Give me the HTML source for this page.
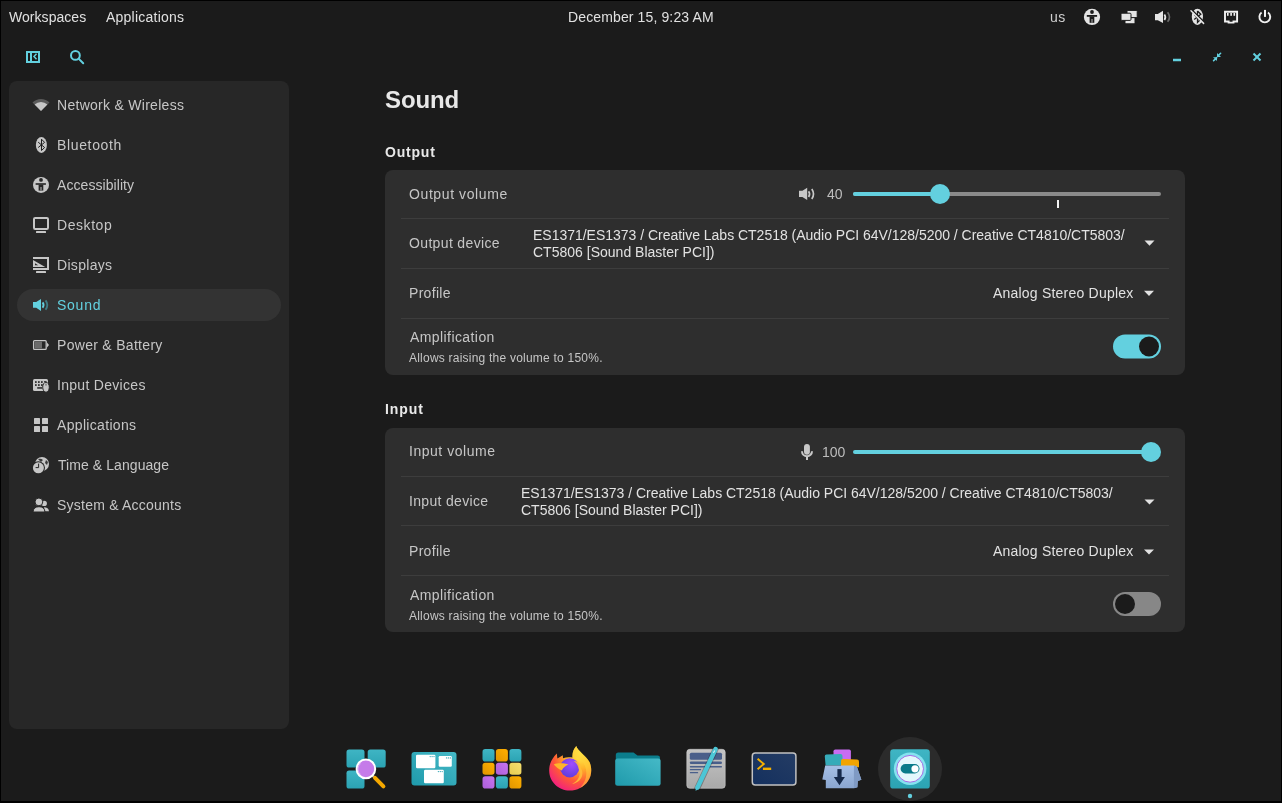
<!DOCTYPE html>
<html><head><meta charset="utf-8">
<style>
*{margin:0;padding:0;box-sizing:border-box}
html,body{width:1282px;height:803px;overflow:hidden;background:#000}
body{font-family:"Liberation Sans",sans-serif;position:relative}
#scr{position:absolute;left:1px;top:1px;width:1280px;height:800px;background:#1b1b1b}
.a{position:absolute;white-space:nowrap;will-change:transform}
svg{position:absolute;overflow:visible}
.b{position:absolute}
</style></head><body>
<div id="scr"></div>
<!-- sidebar -->
<div class="b" style="left:9px;top:81px;width:280px;height:648px;background:#272727;border-radius:8px"></div>
<div class="b" style="left:17px;top:289px;width:264px;height:32px;background:#333333;border-radius:16px"></div>
<!-- cards -->
<div class="b" style="left:385px;top:170px;width:800px;height:205px;background:#2e2e2e;border-radius:8px"></div>
<div class="b" style="left:401px;top:218px;width:768px;height:1px;background:#3d3d3d"></div>
<div class="b" style="left:401px;top:268px;width:768px;height:1px;background:#3d3d3d"></div>
<div class="b" style="left:401px;top:318px;width:768px;height:1px;background:#3d3d3d"></div>
<div class="b" style="left:385px;top:428px;width:800px;height:204px;background:#2e2e2e;border-radius:8px"></div>
<div class="b" style="left:401px;top:476px;width:768px;height:1px;background:#3d3d3d"></div>
<div class="b" style="left:401px;top:525px;width:768px;height:1px;background:#3d3d3d"></div>
<div class="b" style="left:401px;top:575px;width:768px;height:1px;background:#3d3d3d"></div>
<div id="t_ws" class="a" style="left:9.20px;top:9px;font-size:14px;line-height:16px;color:#e0e0e0;letter-spacing:0.044px;">Workspaces</div>
<div id="t_apps" class="a" style="left:105.90px;top:9px;font-size:14px;line-height:16px;color:#e0e0e0;letter-spacing:0.236px;">Applications</div>
<div id="t_date" class="a" style="left:568.10px;top:9px;font-size:14px;line-height:16px;color:#e0e0e0;letter-spacing:0.126px;">December 15, 9:23 AM</div>
<div id="t_us" class="a" style="left:1050.20px;top:9px;font-size:14px;line-height:16px;color:#cfcfcf;letter-spacing:0.400px;">us</div>
<div id="n0" class="a" style="left:57.40px;top:97px;font-size:14px;line-height:16px;color:#c6c6c6;letter-spacing:0.282px;">Network &amp; Wireless</div>
<div id="n1" class="a" style="left:56.50px;top:137px;font-size:14px;line-height:16px;color:#c6c6c6;letter-spacing:0.650px;">Bluetooth</div>
<div id="n2" class="a" style="left:57.30px;top:177px;font-size:14px;line-height:16px;color:#c6c6c6;letter-spacing:0.067px;">Accessibility</div>
<div id="n3" class="a" style="left:56.50px;top:217px;font-size:14px;line-height:16px;color:#c6c6c6;letter-spacing:0.567px;">Desktop</div>
<div id="n4" class="a" style="left:56.50px;top:257px;font-size:14px;line-height:16px;color:#c6c6c6;letter-spacing:0.314px;">Displays</div>
<div id="n5" class="a" style="left:56.50px;top:297px;font-size:14px;line-height:16px;color:#63d0df;letter-spacing:0.750px;">Sound</div>
<div id="n6" class="a" style="left:56.50px;top:337px;font-size:14px;line-height:16px;color:#c6c6c6;letter-spacing:0.300px;">Power &amp; Battery</div>
<div id="n7" class="a" style="left:56.50px;top:377px;font-size:14px;line-height:16px;color:#c6c6c6;letter-spacing:0.300px;">Input Devices</div>
<div id="n8" class="a" style="left:57.00px;top:417px;font-size:14px;line-height:16px;color:#c6c6c6;letter-spacing:0.327px;">Applications</div>
<div id="n9" class="a" style="left:57.60px;top:457px;font-size:14px;line-height:16px;color:#c6c6c6;letter-spacing:0.071px;">Time &amp; Language</div>
<div id="n10" class="a" style="left:56.50px;top:497px;font-size:14px;line-height:16px;color:#c6c6c6;letter-spacing:0.225px;">System &amp; Accounts</div>
<div id="h_sound" class="a" style="left:384.80px;top:86px;font-size:24px;line-height:28px;color:#e8e8e8;font-weight:700;letter-spacing:-0.100px;">Sound</div>
<div id="h_out" class="a" style="left:384.80px;top:144px;font-size:14px;line-height:16px;color:#e8e8e8;font-weight:700;letter-spacing:0.800px;">Output</div>
<div id="o_vol" class="a" style="left:408.80px;top:186px;font-size:14px;line-height:16px;color:#c6c6c6;letter-spacing:0.600px;">Output volume</div>
<div id="o_40" class="a" style="left:826.60px;top:186px;font-size:14px;line-height:16px;color:#bdbdbd;">40</div>
<div id="o_dev" class="a" style="left:408.80px;top:235px;font-size:14px;line-height:16px;color:#c6c6c6;letter-spacing:0.350px;">Output device</div>
<div id="o_es1" class="a" style="left:532.90px;top:227px;font-size:14px;line-height:16px;color:#e2e2e2;letter-spacing:-0.016px;">ES1371/ES1373 / Creative Labs CT2518 (Audio PCI 64V/128/5200 / Creative CT4810/CT5803/</div>
<div id="o_es2" class="a" style="left:532.90px;top:244px;font-size:14px;line-height:16px;color:#e2e2e2;letter-spacing:0.008px;">CT5806 [Sound Blaster PCI])</div>
<div id="o_prof" class="a" style="left:408.80px;top:285px;font-size:14px;line-height:16px;color:#c6c6c6;letter-spacing:0.300px;">Profile</div>
<div id="o_asd" class="a" style="left:993.00px;top:285px;font-size:14px;line-height:16px;color:#e2e2e2;letter-spacing:0.211px;">Analog Stereo Duplex</div>
<div id="o_amp" class="a" style="left:409.80px;top:329px;font-size:14px;line-height:16px;color:#c6c6c6;letter-spacing:0.417px;">Amplification</div>
<div id="o_allow" class="a" style="left:409.20px;top:351px;font-size:12px;line-height:14px;color:#c6c6c6;letter-spacing:0.224px;">Allows raising the volume to 150%.</div>
<div id="h_in" class="a" style="left:384.80px;top:401px;font-size:14px;line-height:16px;color:#e8e8e8;font-weight:700;letter-spacing:0.900px;">Input</div>
<div id="i_vol" class="a" style="left:409.10px;top:443px;font-size:14px;line-height:16px;color:#c6c6c6;letter-spacing:0.527px;">Input volume</div>
<div id="i_100" class="a" style="left:822.00px;top:444px;font-size:14px;line-height:16px;color:#bdbdbd;">100</div>
<div id="i_dev" class="a" style="left:409.10px;top:493px;font-size:14px;line-height:16px;color:#c6c6c6;letter-spacing:0.327px;">Input device</div>
<div id="i_es1" class="a" style="left:520.90px;top:485px;font-size:14px;line-height:16px;color:#e2e2e2;letter-spacing:-0.016px;">ES1371/ES1373 / Creative Labs CT2518 (Audio PCI 64V/128/5200 / Creative CT4810/CT5803/</div>
<div id="i_es2" class="a" style="left:520.90px;top:502px;font-size:14px;line-height:16px;color:#e2e2e2;letter-spacing:0.008px;">CT5806 [Sound Blaster PCI])</div>
<div id="i_prof" class="a" style="left:408.80px;top:543px;font-size:14px;line-height:16px;color:#c6c6c6;letter-spacing:0.300px;">Profile</div>
<div id="i_asd" class="a" style="left:993.00px;top:543px;font-size:14px;line-height:16px;color:#e2e2e2;letter-spacing:0.211px;">Analog Stereo Duplex</div>
<div id="i_amp" class="a" style="left:409.80px;top:587px;font-size:14px;line-height:16px;color:#c6c6c6;letter-spacing:0.417px;">Amplification</div>
<div id="i_allow" class="a" style="left:409.20px;top:609px;font-size:12px;line-height:14px;color:#c6c6c6;letter-spacing:0.224px;">Allows raising the volume to 150%.</div>
<!-- window header icons -->
<svg style="left:0;top:0" width="1282" height="803" viewBox="0 0 1282 803">
 <g fill="none" stroke="#63d0df">
  <rect x="27" y="52" width="12" height="10" stroke-width="2"/>
  <line x1="31" y1="52" x2="31" y2="62" stroke-width="2"/>
  <polyline points="36.5,53.8 34,56.5 36.5,59.2" stroke-width="1.5"/>
  <circle cx="75.4" cy="55.4" r="4.4" stroke-width="2"/>
  <line x1="78.6" y1="58.6" x2="83.2" y2="63.2" stroke-width="2" stroke-linecap="round"/>
  <line x1="1173" y1="60" x2="1181" y2="60" stroke-width="2.5"/>
  <line x1="1253.5" y1="53.5" x2="1260.5" y2="60.5" stroke-width="2"/>
  <line x1="1260.5" y1="53.5" x2="1253.5" y2="60.5" stroke-width="2"/>
  <line x1="1217.6" y1="56.3" x2="1220.6" y2="53.3" stroke-width="1.6" stroke-linecap="round"/>
  <line x1="1216.6" y1="57.8" x2="1213.6" y2="60.6" stroke-width="1.6" stroke-linecap="round"/>
 </g>
 <g fill="#63d0df">
  <polygon points="1217,52.9 1217,56.9 1221,56.9"/>
  <polygon points="1213,57.2 1217,57.2 1217,61.1"/>
 </g>
</svg>
<!-- top panel icons -->
<svg style="left:0;top:0" width="1282" height="40" viewBox="0 0 1282 40">
 <g fill="#e4e4e4">
  <circle cx="1092" cy="16.9" r="8.1"/>
 </g>
 <g fill="#1b1b1b">
  <circle cx="1092" cy="12" r="1.9"/>
  <rect x="1086.8" y="15" width="10.3" height="1.8"/>
  <rect x="1089.6" y="16.5" width="4.7" height="6.3"/>
 </g>
 <rect x="1091.3" y="19" width="1.4" height="3.8" fill="#8a8a8a"/>
 <g fill="#e4e4e4" stroke="#1b1b1b" stroke-width="1">
  <rect x="1125" y="17" width="10" height="6.8" rx="1"/>
  <rect x="1127" y="10.4" width="10.2" height="7.2" rx="1"/>
  <rect x="1121" y="13.2" width="10" height="7.2" rx="1"/>
 </g>
 <g fill="#e4e4e4">
  <polygon points="1155,14.1 1157.8,14.1 1163,10.8 1163,23 1157.8,20.2 1155,20.2"/>
 </g>
 <path d="M1164.4,14.4 Q1166.4,17.2 1164.4,20.1" stroke="#e4e4e4" stroke-width="1.7" fill="none"/>
 <path d="M1167.6,12.2 Q1171.4,17.2 1167.6,21.7" stroke="#6a6a6a" stroke-width="1.7" fill="none"/>
 <ellipse cx="1197.4" cy="16.8" rx="5.6" ry="8.1" fill="#e4e4e4"/>
 <path d="M1197.5,11 V22.4 L1199.9,20 L1194.4,14.6 M1194.2,19.4 L1200.8,14.2 L1197.5,11" stroke="#1b1b1b" stroke-width="1.3" fill="none"/>
 <line x1="1192" y1="10" x2="1204.6" y2="22.6" stroke="#1b1b1b" stroke-width="1.6"/>
 <line x1="1191" y1="10.8" x2="1203.6" y2="23.4" stroke="#e4e4e4" stroke-width="1.5" stroke-linecap="round"/>
 <path d="M1225,11.8 H1237.1 V21.5 H1233.5 V22.6 H1228.6 V21.5 H1225 Z" fill="none" stroke="#f0f0f0" stroke-width="1.9"/>
 <g fill="#f0f0f0"><rect x="1227" y="13" width="1.6" height="2.8"/><rect x="1230.3" y="13" width="1.6" height="2.8"/><rect x="1233.5" y="13" width="1.6" height="2.8"/></g>
 <path d="M1261.6,12.6 A5.4,5.4 0 1 0 1268,12.6" fill="none" stroke="#f0f0f0" stroke-width="1.9"/>
 <rect x="1264" y="9.9" width="2" height="7" fill="#f0f0f0"/>
</svg>
<!-- sidebar icons -->
<svg style="left:0;top:0" width="300" height="540" viewBox="0 0 300 540">
 <g transform="translate(29,93)">
  <path d="M12,18 L3.5,9.5 A12,12 0 0 1 20.5,9.5 Z" fill="#5a5a5a"/>
  <path d="M12,18 L5.6,11.6 A9,9 0 0 1 18.4,11.6 Z" fill="#c6c6c6"/>
 </g>
 <g transform="translate(29,133)">
  <ellipse cx="12.4" cy="11.9" rx="5.5" ry="8" fill="#c6c6c6"/>
  <path d="M12.5,6.2 V17.5 L15.6,14.5 L9.2,9.2 M9.2,14.5 L15.6,9.4 L12.5,6.2" stroke="#1e1e1e" stroke-width="1" fill="none"/>
 </g>
 <g transform="translate(29,173)">
  <circle cx="12" cy="11.9" r="8" fill="#c6c6c6"/>
  <circle cx="12" cy="6.9" r="1.9" fill="#262626"/>
  <rect x="6.6" y="10.2" width="10.3" height="1.6" fill="#262626"/>
  <rect x="9.6" y="11.6" width="4.7" height="6" fill="#262626"/>
  <rect x="11.1" y="14" width="1.8" height="3.6" fill="#7a7a7a"/>
 </g>
 <g transform="translate(29,213)">
  <rect x="5" y="4.9" width="14" height="11" rx="1.2" fill="none" stroke="#c6c6c6" stroke-width="2"/>
  <rect x="7" y="18" width="10" height="2" rx="0.5" fill="#c6c6c6"/>
 </g>
 <g transform="translate(29,253)">
  <path d="M4,4 H20 V16.9 H4 V14.9 H18 V6 H4 Z" fill="#c6c6c6"/>
  <path d="M4,7 L16.2,14 H4 Z M6,10.3 V12.2 H9.2 Z" fill="#c6c6c6" fill-rule="evenodd"/>
  <rect x="7" y="18" width="10" height="2" rx="0.5" fill="#c6c6c6"/>
 </g>
 <g transform="translate(29,293)">
  <path d="M4,9 H7.2 L12,5.9 V18 L7.2,14.8 H4 Z" fill="#63d0df"/>
  <path d="M13.6,9.4 Q15.6,12 13.6,14.8" stroke="#63d0df" stroke-width="1.8" fill="none"/>
  <path d="M16.6,7.4 Q20,12 16.6,16.8" stroke="#3f7d86" stroke-width="1.8" fill="none"/>
 </g>
 <g transform="translate(29,333)">
  <rect x="4.6" y="7.6" width="12.6" height="8.8" rx="1" fill="none" stroke="#c6c6c6" stroke-width="1.3"/>
  <rect x="5.6" y="8.5" width="7.4" height="7" fill="#6b6b6b"/>
  <polygon points="18,9.6 20,12 18,14.4" fill="#c6c6c6"/>
 </g>
 <g transform="translate(29,373)">
  <rect x="4" y="6" width="15" height="12" rx="1.5" fill="#c6c6c6"/>
  <g fill="#262626"><rect x="6" y="8.2" width="1.7" height="1.7"/><rect x="9" y="8.2" width="1.7" height="1.7"/><rect x="12" y="8.2" width="1.7" height="1.7"/><rect x="15" y="8.2" width="2.5" height="1.1"/><rect x="6" y="11.2" width="1.7" height="1.7"/><rect x="9" y="11.2" width="1.7" height="1.7"/><rect x="12" y="11.2" width="1.7" height="1.7"/><rect x="8.2" y="14.2" width="5" height="1.5"/></g>
  <ellipse cx="17" cy="14.2" rx="3.3" ry="5" fill="#c6c6c6" stroke="#262626" stroke-width="1"/>
  <rect x="16.3" y="10.6" width="1.4" height="2" fill="#777"/>
 </g>
 <g transform="translate(29,413)" fill="#c6c6c6">
  <rect x="5" y="5" width="6" height="6" rx="0.6"/><rect x="13" y="5" width="6" height="6" rx="0.6"/>
  <rect x="5" y="13" width="6" height="6" rx="0.6"/><rect x="13" y="13" width="6" height="6" rx="0.6"/>
 </g>
 <g transform="translate(29,453)">
  <circle cx="13" cy="11" r="7" fill="#c6c6c6"/>
  <path d="M9,6 Q12,5 14,7 L12,9 Z M17,7 L19,9 L18,12 L16,10 Z" fill="#3a3a3a"/>
  <circle cx="9.4" cy="14.8" r="6.6" fill="#262626"/>
  <circle cx="9.4" cy="14.8" r="5.5" fill="#c6c6c6"/>
  <path d="M9.6,10.6 V14.6 H6.6" stroke="#262626" stroke-width="1" fill="none"/>
 </g>
 <g transform="translate(29,493)" fill="#c6c6c6">
  <circle cx="15.2" cy="10.4" r="2.7"/>
  <path d="M15,14.2 Q19.8,14.6 20,18.2 H15.8 Z"/>
  <circle cx="9.9" cy="8.9" r="3.9" stroke="#262626" stroke-width="1"/>
  <path d="M4,19 Q4.4,13.7 10,13.7 Q15.6,13.7 16,19 Z" stroke="#262626" stroke-width="1"/>
 </g>
</svg>
<!-- content icons -->
<svg style="left:0;top:0" width="1282" height="803" viewBox="0 0 1282 803">
 <path d="M799,190.8 H802.4 L807.2,187.7 V199.9 L802.4,197.1 H799 Z" fill="#c8c8c8"/>
 <path d="M808.6,191.2 Q810.6,194 808.6,196.9" stroke="#c8c8c8" stroke-width="1.7" fill="none"/>
 <path d="M811.8,189 Q815.2,194 811.8,199" stroke="#c8c8c8" stroke-width="1.7" fill="none"/>
 <rect x="804" y="443.9" width="5.9" height="10.8" rx="2.95" fill="#c8c8c8"/>
 <path d="M802,451.2 A5,5 0 0 0 812,451.2" stroke="#c8c8c8" stroke-width="2" fill="none"/>
 <rect x="806" y="456" width="2" height="4" fill="#c8c8c8"/>
 <!-- sliders -->
 <line x1="855" y1="194" x2="1159" y2="194" stroke="#8a8a8a" stroke-width="4" stroke-linecap="round"/>
 <line x1="855" y1="194" x2="940" y2="194" stroke="#63d0df" stroke-width="4" stroke-linecap="round"/>
 <circle cx="940" cy="194" r="10" fill="#63d0df"/>
 <rect x="1057" y="200" width="2" height="8" fill="#f4f4f4"/>
 <line x1="855" y1="452" x2="1151" y2="452" stroke="#63d0df" stroke-width="4" stroke-linecap="round"/>
 <circle cx="1151" cy="452" r="10" fill="#63d0df"/>
 <!-- dropdown arrows -->
 <g fill="#e2e2e2">
  <polygon points="1144.5,240.6 1154.5,240.6 1149.5,245.8"/>
  <polygon points="1144,290.8 1154,290.8 1149,296"/>
  <polygon points="1144.5,499.4 1154.5,499.4 1149.5,504.6"/>
  <polygon points="1144,549.4 1154,549.4 1149,554.6"/>
 </g>
 <!-- toggles -->
 <rect x="1113" y="334.5" width="48" height="24" rx="12" fill="#63d0df"/>
 <circle cx="1149" cy="346.5" r="10" fill="#1b1b1b"/>
 <rect x="1113" y="592" width="48" height="24" rx="12" fill="#878787"/>
 <circle cx="1125" cy="604" r="10" fill="#1b1b1b"/>
</svg>
<!-- dock -->
<svg style="left:0;top:720px" width="1282" height="83" viewBox="0 720 1282 83">
 <defs>
  <linearGradient id="teal" x1="0" y1="1" x2="1" y2="0"><stop offset="0" stop-color="#1f9aab"/><stop offset="1" stop-color="#45b9c7"/></linearGradient>
  <linearGradient id="tealv" x1="0" y1="0" x2="0" y2="1"><stop offset="0" stop-color="#3fb5c4"/><stop offset="1" stop-color="#2ba3b3"/></linearGradient>
  <linearGradient id="orng" x1="0" y1="1" x2="1" y2="0"><stop offset="0" stop-color="#e09500"/><stop offset="1" stop-color="#ffb000"/></linearGradient>
  <linearGradient id="purp" x1="0" y1="1" x2="1" y2="0"><stop offset="0" stop-color="#ac5ed8"/><stop offset="1" stop-color="#c874f0"/></linearGradient>
  <linearGradient id="yel" x1="0" y1="1" x2="1" y2="0"><stop offset="0" stop-color="#e8cc50"/><stop offset="1" stop-color="#f6e070"/></linearGradient>
  <linearGradient id="navy" x1="0" y1="1" x2="1" y2="0"><stop offset="0" stop-color="#14305e"/><stop offset="1" stop-color="#243c64"/></linearGradient>
  <linearGradient id="paper" x1="0" y1="0" x2="0" y2="1"><stop offset="0" stop-color="#c4c4c4"/><stop offset="1" stop-color="#a9a9a9"/></linearGradient>
  <linearGradient id="box" x1="0" y1="0" x2="0" y2="1"><stop offset="0" stop-color="#a6c0e6"/><stop offset="1" stop-color="#8aa6d0"/></linearGradient>
  <radialGradient id="ffo" cx="0.75" cy="0.15" r="1"><stop offset="0" stop-color="#fff44f"/><stop offset="0.35" stop-color="#ffb52a"/><stop offset="0.65" stop-color="#ff5a36"/><stop offset="1" stop-color="#f0158c"/></radialGradient>
  <radialGradient id="ffp" cx="0.6" cy="0.3" r="0.8"><stop offset="0" stop-color="#a04dff"/><stop offset="1" stop-color="#5a3bd8"/></radialGradient>
 </defs>
 <!-- 1 launcher -->
 <rect x="346.5" y="749.4" width="18" height="18.2" rx="2.6" fill="url(#tealv)"/>
 <rect x="367.7" y="749.4" width="18" height="18.2" rx="2.6" fill="url(#tealv)"/>
 <rect x="346.5" y="770.6" width="18" height="18" rx="2.6" fill="url(#tealv)"/>
 <line x1="371.8" y1="774.8" x2="375.6" y2="778.6" stroke="#9a9a9a" stroke-width="2.6"/>
 <line x1="375" y1="777.8" x2="383.4" y2="786.4" stroke="#f5a800" stroke-width="4" stroke-linecap="round"/>
 <circle cx="365.9" cy="768.9" r="9.3" fill="#c57be9" stroke="#ffffff" stroke-width="2"/>
 <path d="M360.5,763.5 A7.2,7.2 0 0 0 360.5,774.5" stroke="#e6c0f8" stroke-width="0.8" fill="none"/>
 <!-- 2 workspaces -->
 <rect x="411.5" y="752" width="45" height="33.5" rx="3" fill="url(#teal)"/>
 <rect x="416" y="754.8" width="19.4" height="13.4" rx="1.2" fill="#fff"/>
 <rect x="438.7" y="756" width="13.1" height="10.7" rx="1.2" fill="#fff"/>
 <rect x="424" y="769.7" width="19.8" height="13.5" rx="1.2" fill="#fff"/>
  <circle cx="430.2" cy="756.6" r="0.7" fill="#3aa9b8"/><circle cx="432.1" cy="756.6" r="0.7" fill="#3aa9b8"/><circle cx="434.0" cy="756.6" r="0.7" fill="#3aa9b8"/><circle cx="446.6" cy="757.9" r="0.7" fill="#3aa9b8"/><circle cx="448.5" cy="757.9" r="0.7" fill="#3aa9b8"/><circle cx="450.4" cy="757.9" r="0.7" fill="#3aa9b8"/><circle cx="438.4" cy="771.6" r="0.7" fill="#3aa9b8"/><circle cx="440.3" cy="771.6" r="0.7" fill="#3aa9b8"/><circle cx="442.2" cy="771.6" r="0.7" fill="#3aa9b8"/>
 <!-- 3 app grid -->
 <g>
  <rect x="482.5" y="749.1" width="12" height="12.4" rx="2.8" fill="url(#tealv)"/>
  <rect x="495.9" y="749.1" width="12" height="12.4" rx="2.8" fill="url(#orng)"/>
  <rect x="509.4" y="749.1" width="12" height="12.4" rx="2.8" fill="url(#tealv)"/>
  <rect x="482.5" y="762.8" width="12" height="12" rx="2.8" fill="url(#orng)"/>
  <rect x="495.9" y="762.8" width="12" height="12" rx="2.8" fill="url(#purp)"/>
  <rect x="509.4" y="762.8" width="12" height="12" rx="2.8" fill="url(#yel)"/>
  <rect x="482.5" y="776.3" width="12" height="12.2" rx="2.8" fill="url(#purp)"/>
  <rect x="495.9" y="776.3" width="12" height="12.2" rx="2.8" fill="url(#tealv)"/>
  <rect x="509.4" y="776.3" width="12" height="12.2" rx="2.8" fill="url(#orng)"/>
 </g>
 <!-- 4 firefox -->
 <path d="M576.3,745.9 C577.5,750.5 585.5,755 589.5,762 C592.2,768 591.8,775.5 588,781 C584,787.2 577,790.6 569.5,790.6 C559,790.6 549.4,782 549.2,771 C549,765 551.2,759 556.8,753.5 L557.4,758.6 L562.8,755.3 L563,758.2 C566,757 569.5,757 572.5,757.6 C572,752.5 573.8,748.5 576.3,745.9 Z" fill="url(#ffo)"/>
 <path d="M576.3,745.9 C577.5,750.5 585.5,755 589.5,762 C592.2,768 591.8,775.5 588,781 C586,784 583,786.5 580,788 C586,782 588,774 585,766 C582,759 575,755 572.5,757.6 C572,752.5 573.8,748.5 576.3,745.9 Z" fill="#ffd23a" opacity="0.55"/>
 <circle cx="569.7" cy="767.8" r="9.6" fill="url(#ffp)"/>
 <path d="M553.8,764.4 C557.5,762.8 564,763 568.5,764.4 C565.5,765.6 563,767.5 561.8,770.6 C558.5,768.6 555.5,766.5 553.8,764.4 Z" fill="#ffb52a"/>
 <path d="M573.5,761 C578,761 581,763.5 580.6,767.5 C585,774 581,782.5 572,784 C578.5,780.5 581.5,775 578.5,768.5 C578,765 576,762.5 573.5,761 Z" fill="#ffbd3a" opacity="0.9"/>
 <!-- 5 files -->
 <path d="M618.3,752.4 H633.5 L637.5,755.4 H657.6 Q660,755.4 660,757.8 V762 H615.8 V754.9 Q615.8,752.4 618.3,752.4 Z" fill="#0b7d8c"/>
 <rect x="615.2" y="758.6" width="45.4" height="27.2" rx="2.5" fill="url(#teal)"/>
 <!-- 6 text editor -->
 <rect x="686.8" y="749.3" width="38.4" height="39" rx="3" fill="url(#paper)" stroke="#cfcfcf" stroke-width="0.6"/>
 <rect x="689.8" y="752.7" width="32.2" height="7.1" rx="1.5" fill="#4a5f8a"/>
 <rect x="689.8" y="761.6" width="32.2" height="2.4" rx="1.2" fill="#4a5f8a"/>
 <rect x="689.8" y="766.1" width="32.2" height="1.3" rx="0.6" fill="#4a5f8a"/>
 <rect x="689.8" y="769.1" width="11.4" height="1.2" rx="0.6" fill="#4a5f8a"/>
 <rect x="689.8" y="772.1" width="8.4" height="1.2" rx="0.6" fill="#4a5f8a"/>
 <line x1="715.6" y1="749" x2="697.2" y2="788.5" stroke="#1c1c1c" stroke-width="6" stroke-linecap="round" opacity="0.35"/>
 <line x1="715.6" y1="749" x2="697.5" y2="787.5" stroke="#4cc6d6" stroke-width="4.4" stroke-linecap="round"/>
 <polygon points="695.6,786 699.4,787.8 695.7,791" fill="#4cc6d6"/>
 <line x1="714.6" y1="750.5" x2="713.6" y2="752.8" stroke="#fff" stroke-width="1"/>
 <!-- 7 terminal -->
 <rect x="752.3" y="752.9" width="43.6" height="32" rx="3" fill="url(#navy)" stroke="#c2c2c2" stroke-width="1.5"/>
 <polyline points="757.6,758.7 763.8,764 757.6,769.3" fill="none" stroke="#f5b000" stroke-width="1.9"/>
 <rect x="762.9" y="767.6" width="8.3" height="2.4" fill="#f5b000"/>
 <!-- 8 store -->
 <rect x="833.5" y="749.4" width="17.4" height="12" rx="1.8" fill="#c96cf2"/>
 <path d="M824.8,756.5 Q824.6,754.8 826.4,754.6 L840.5,754 Q842.5,754 842.5,756 L842.5,765.5 L825.6,765.5 Z" fill="#36abb9"/>
 <path d="M841,760.8 Q841,759 842.8,759 L857,759.6 Q859,759.8 859,761.6 V767.3 H841 Z" fill="#f2a400"/>
 <path d="M825.2,765.5 H853.9 L856.8,766.5 L861.4,779.8 L857.8,781 L857.4,787.2 L853.9,788.3 H825.8 L825.8,780 L822.3,779.5 Z" fill="url(#box)"/>
 <path d="M853.9,765.5 L856.8,766.5 L861.4,779.8 L857.8,781 L857.4,787.2 L853.9,788.3 Z" fill="#7f9ac4"/>
 <rect x="837.4" y="769.1" width="4.2" height="8.6" fill="#15294a"/>
 <polygon points="833.8,777 844.9,777 839.5,785.2" fill="#15294a"/>
 <!-- 9 settings highlighted -->
 <circle cx="910" cy="769" r="32" fill="#2b2b2b"/>
 <rect x="890.2" y="749.3" width="39.6" height="39.3" rx="3.2" fill="url(#tealv)"/>
 <circle cx="910.1" cy="768.8" r="16.3" fill="#86e2ef"/>
 <circle cx="910.1" cy="768.8" r="13.4" fill="#e4f8fc" stroke="#a56ce6" stroke-width="1"/>
 <rect x="900.6" y="764" width="18.9" height="9.5" rx="4.75" fill="#0a7b8a"/>
 <circle cx="915" cy="768.8" r="3.6" fill="#ffffff"/>
 <circle cx="910" cy="796" r="2.2" fill="#63d0df"/>
</svg>

</body></html>
